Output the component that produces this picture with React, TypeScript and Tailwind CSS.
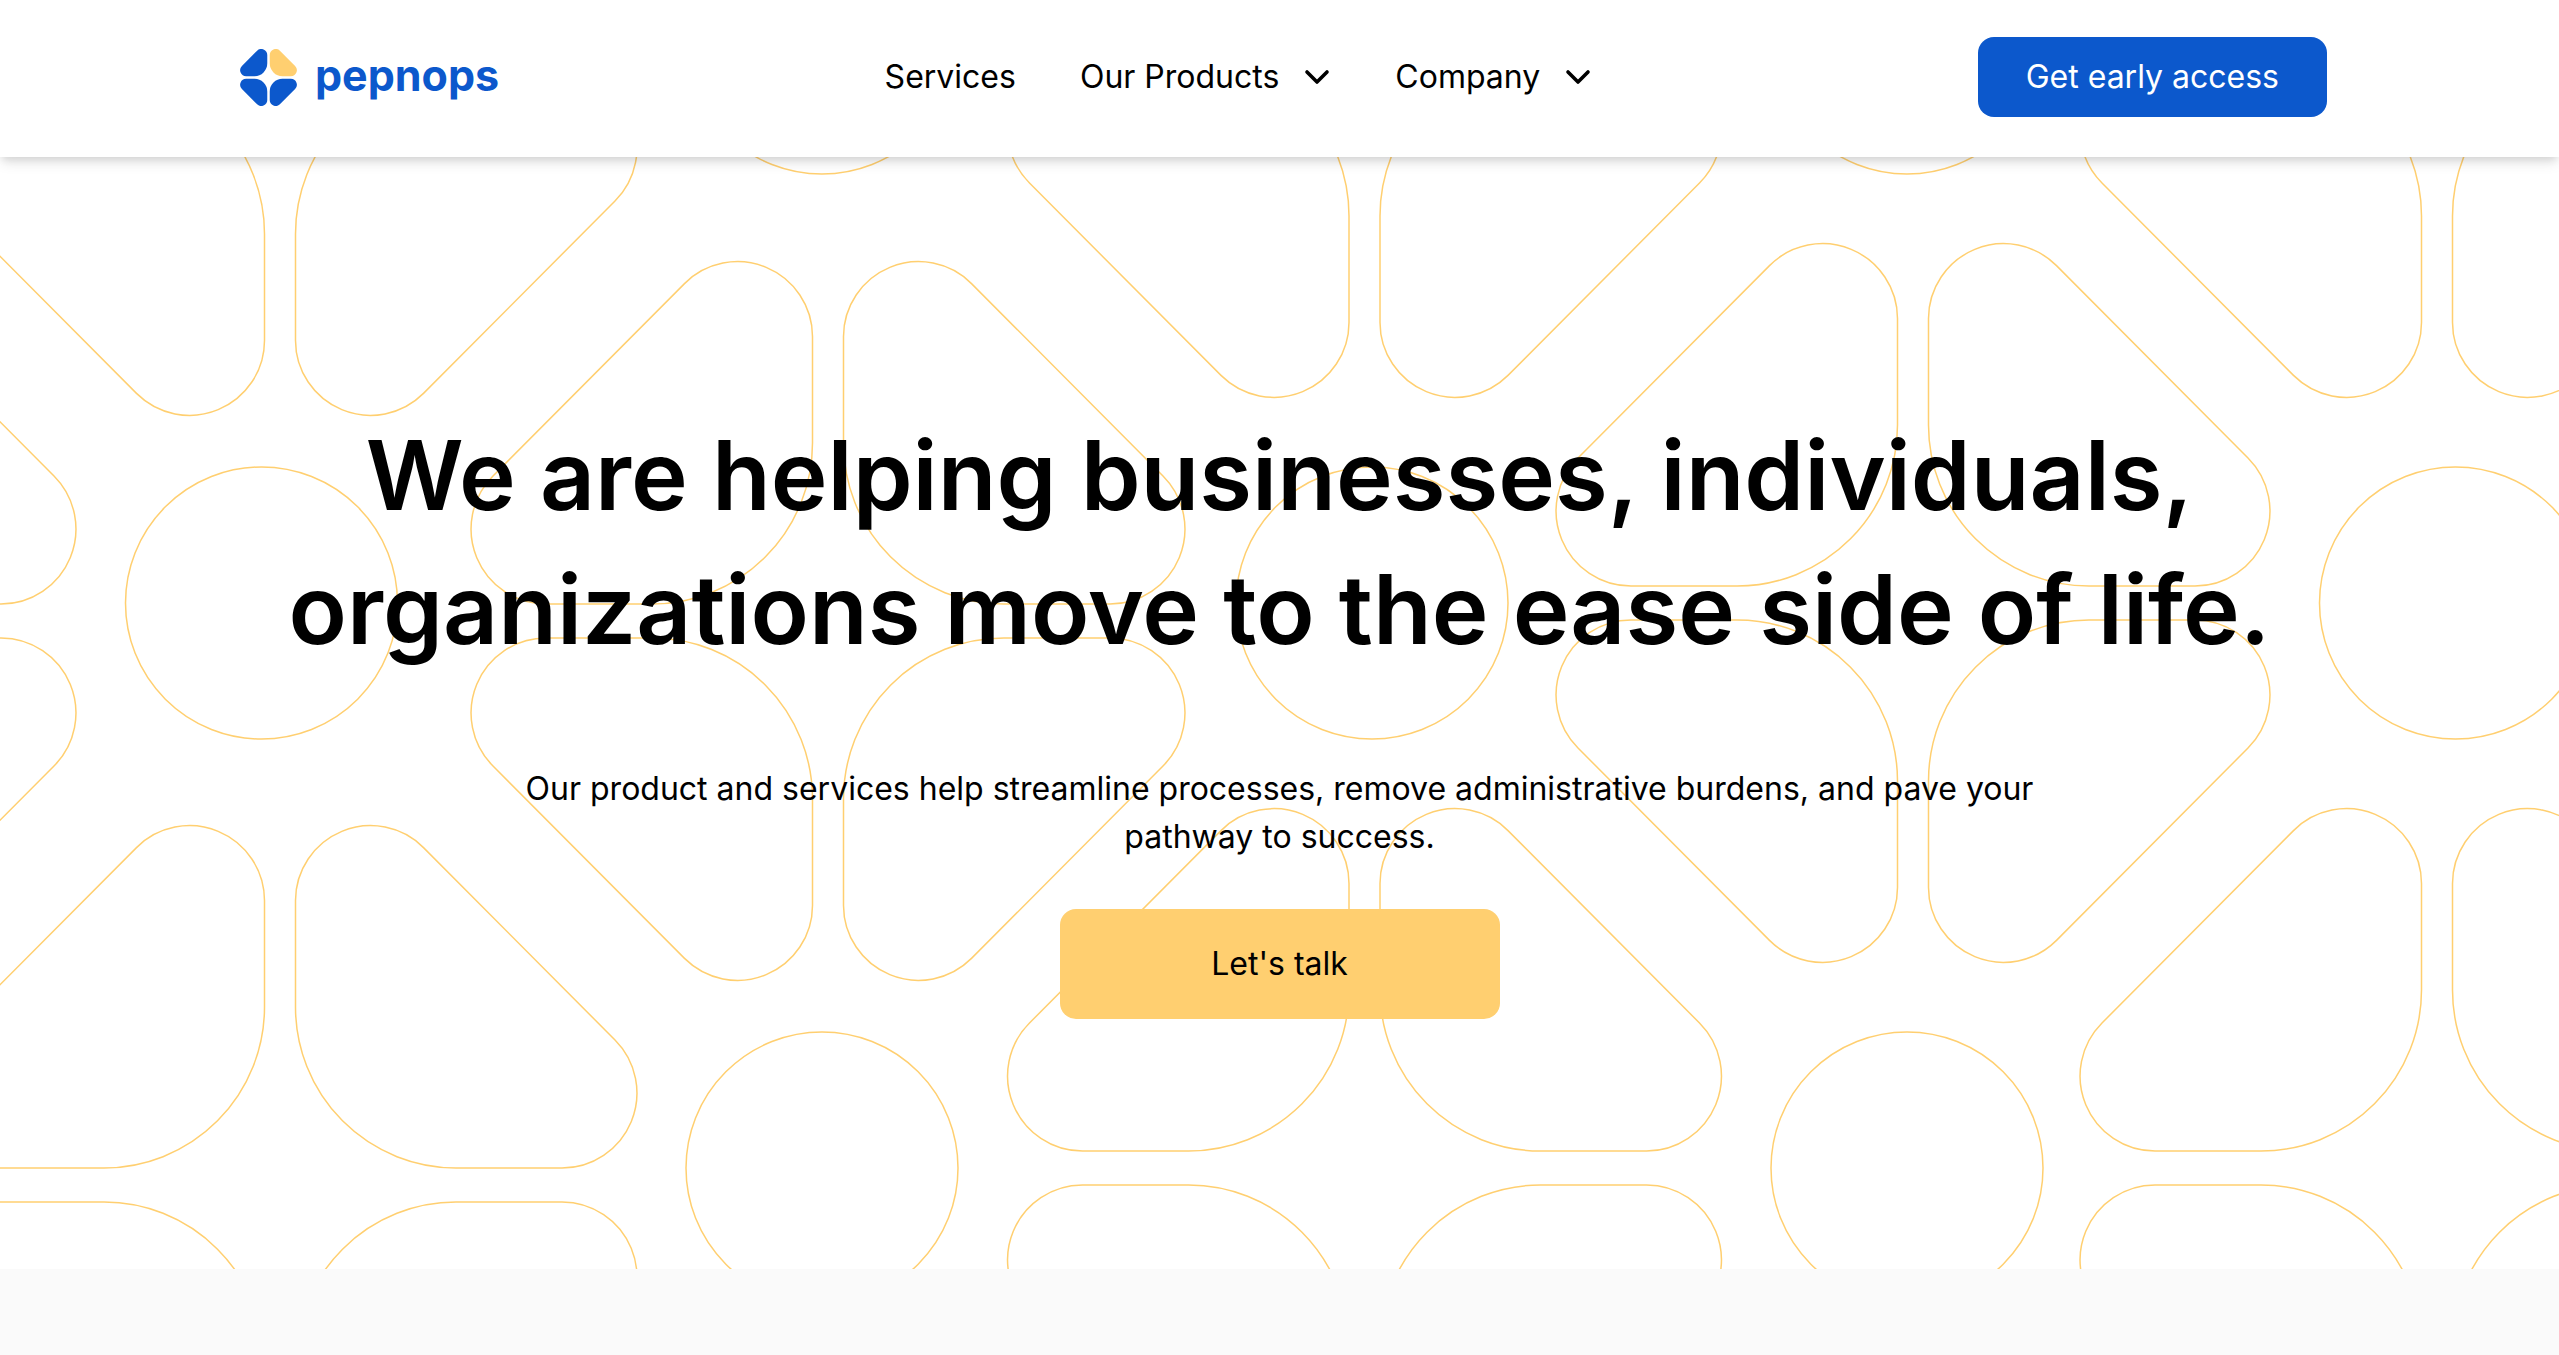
const PETAL =
  "M15.5 -178 V-284.4 A75 75 0 0 1 143.5 -337.4 L335 -145 A75 75 0 0 1 282 -17 H176 A160.5 161 0 0 1 15.5 -178 Z";

const FLOWERS = [
  [280, -101],
  [280, 1028],
  [-281, 464],
  [828, 464],
  [1364.5, -119],
  [1364.5, 1011],
  [1913, 446],
  [2437, -119],
  [2437, 1011],
];

const CIRCLES = [
  [261.5, 446],
  [1372, 446],
  [2455.5, 446],
  [822, -119],
  [822, 1011],
  [1907, -119],
  [1907, 1011],
];

const MIRRORS = ["scale(1 1)", "scale(-1 1)", "scale(1 -1)", "scale(-1 -1)"];

function Pattern() {
  return (
    <svg
      aria-hidden="true"
      className="absolute inset-0 h-full w-full"
      viewBox="0 0 2559 1112"
      preserveAspectRatio="xMidYMid slice"
      fill="none"
      stroke="#ffcf70"
      strokeWidth="1.5"
    >
      {FLOWERS.map(([x, y]) => (
        <g key={`${x} ${y}`} transform={`translate(${x} ${y})`}>
          {MIRRORS.map((m) => (
            <path key={m} d={PETAL} transform={m} />
          ))}
        </g>
      ))}
      {CIRCLES.map(([x, y]) => (
        <circle key={`${x} ${y}`} cx={x} cy={y} r="136" />
      ))}
    </svg>
  );
}

function Logo() {
  return (
    <a href="#" className="flex items-center gap-[18px] text-[#0c58cc]">
      <svg aria-hidden="true" className="size-[57px]" viewBox="-359 -359 718 718">
        {MIRRORS.map((m) => (
          <path key={m} d={PETAL} transform={m} fill={m === "scale(1 1)" ? "#ffcf70" : "#0c58cc"} />
        ))}
      </svg>
      <span className="pb-1 text-[43px] leading-[54px] font-bold">pepnops</span>
    </a>
  );
}

function Chevron() {
  return (
    <svg
      aria-hidden="true"
      className="size-7"
      viewBox="0 0 28 28"
      fill="none"
      stroke="currentColor"
      strokeWidth="3.6"
      strokeLinecap="round"
      strokeLinejoin="round"
    >
      <path d="M4 9 L14 19 L24 9" />
    </svg>
  );
}

export default function App() {
  return (
    <div className="min-h-screen bg-[#fafafa] font-['Inter',sans-serif] text-[32px] leading-[48px] text-black">
      <header className="relative z-10 flex items-center justify-between bg-white pt-[37px] pr-[232px] pb-10 pl-[240px] shadow-[0_8px_12px_-2px_rgba(0,0,0,0.1),0_4px_8px_-2px_rgba(0,0,0,0.1)]">
        <Logo />
        <nav className="flex items-center gap-16">
          <a href="#">Services</a>
          <button type="button" className="flex items-center gap-6">
            Our Products
            <Chevron />
          </button>
          <button type="button" className="flex items-center gap-6">
            Company
            <Chevron />
          </button>
        </nav>
        <button type="button" className="rounded-2xl bg-[#0c58cc] px-12 py-4 text-white">
          Get early access
        </button>
      </header>

      <main className="relative overflow-hidden bg-white pt-[251px] pb-[250px]">
        <Pattern />
        <div className="relative flex flex-col items-center text-center">
          <h1 className="max-w-[2080px] text-[96px] leading-[134px] font-semibold">
            We are helping businesses, individuals, organizations move to the ease side of life.
          </h1>
          <p className="mt-[89px] max-w-[1536px]">
            Our product and services help streamline processes, remove administrative burdens, and pave your
            pathway to success.
          </p>
          <button type="button" className="mt-12 w-[440px] rounded-2xl bg-[#ffcf70] py-[31px]">
            Let's talk
          </button>
        </div>
      </main>
    </div>
  );
}
